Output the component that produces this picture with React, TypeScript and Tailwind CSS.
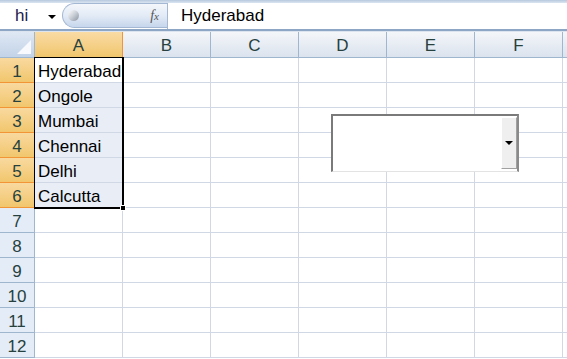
const cols = ["A", "B", "C", "D", "E", "F", "G"];
const cities = ["Hyderabad", "Ongole", "Mumbai", "Chennai", "Delhi", "Calcutta"];
const rows = Array.from({ length: 12 }, (_, i) => i + 1);

const font = { fontFamily: '"Liberation Sans", Arial, sans-serif' };

const FormulaBar = () => (
  <div className="h-[32px] flex flex-col bg-white">
    <div className="h-[3px] bg-gradient-to-b from-[#b7c9de] to-[#dbe5f1]" />
    <div className="flex-1 flex items-stretch">
      {/* name box */}
      <div className="w-[62px] flex items-center pl-[15px] text-[17px] text-[#1a1a4a]">
        <span>hi</span>
        <span className="ml-[20px] mt-[1px] w-0 h-0 border-l-[4px] border-r-[4px] border-t-[4px] border-l-transparent border-r-transparent border-t-black" />
      </div>
      {/* fx bubble */}
      <div className="w-[105px] rounded-l-full border border-r-0 border-[#a4b8d3] bg-gradient-to-b from-[#f4f7fb] via-[#e3ebf6] to-[#c6d6ec] flex items-center mb-[1px]">
        <div className="ml-[5px] w-[11px] h-[11px] rounded-full bg-gradient-to-br from-[#ffffff] via-[#c9ced6] to-[#8a939f]" />
        <span className="ml-auto mr-[8px] text-[14px] italic text-[#555]" style={{ fontFamily: '"Liberation Serif", serif' }}>
          f<span className="text-[11px]">x</span>
        </span>
      </div>
      <div className="w-px bg-[#a4b8d3]" />
      <div className="flex-1 flex items-center pl-[13px] text-[17px] text-black">Hyderabad</div>
    </div>
    <div className="h-[2px] bg-[#8ea6c6]" />
    <div className="h-px bg-[#dbe4ef]" />
  </div>
);

export default function App() {
  return (
    <div className="w-[567px] h-[359px] overflow-hidden relative bg-white" style={font}>
      <FormulaBar />
      {/* column headers */}
      <div className="flex h-[26px]">
        <div className="w-[35px] shrink-0 border-r border-b border-[#9eb6ce] bg-gradient-to-b from-[#dfe8f4] to-[#c3d3e8] relative">
          <svg className="absolute right-[3px] bottom-[3px]" width="14" height="14" viewBox="0 0 14 14">
            <polygon points="14,0 14,14 0,14" fill="#f7f9fc" />
          </svg>
        </div>
        {cols.map((c) => (
          <div
            key={c}
            className={`w-[88px] shrink-0 border-r border-b flex items-center justify-center pt-[2px] text-[17px] text-[#27413e] ${
              c === "A"
                ? "bg-gradient-to-b from-[#f9dba4] to-[#f1c66c] border-[#f29536]"
                : "bg-gradient-to-b from-[#f4f6f9] to-[#dbe3ee] border-[#9eb6ce]"
            }`}
          >
            {c === "G" ? "" : c}
          </div>
        ))}
      </div>
      {/* rows */}
      {rows.map((r) => (
        <div key={r} className="flex h-[25px]">
          <div
            className={`w-[35px] shrink-0 border-r border-b flex items-center justify-center pt-[3px] text-[17px] text-[#27413e] ${
              r <= 6
                ? "bg-gradient-to-b from-[#f9d99f] to-[#f1c66c] border-[#f29536]"
                : "bg-[#e4ecf7] border-[#9eb6ce]"
            }`}
          >
            {r}
          </div>
          {cols.map((c) => (
            <div
              key={c}
              className={`w-[88px] shrink-0 border-r border-b border-[#d0d7e5] flex items-center pl-[3px] pt-[3px] text-[17px] text-black whitespace-nowrap overflow-hidden ${
                c === "A" && r > 1 && r <= 6 ? "bg-[#e8edf6]" : "bg-white"
              }`}
            >
              {c === "A" && r <= 6 ? cities[r - 1] : ""}
            </div>
          ))}
        </div>
      ))}

      {/* selection border */}
      <div className="absolute left-[34px] top-[57px] w-[90px] h-[152px] border-2 border-black border-l border-t pointer-events-none" />
      <div className="absolute left-[120px] top-[205px] w-[6px] h-[6px] bg-black border border-white" />

      {/* combo box control */}
      <div className="absolute left-[331px] top-[114px] w-[188px] h-[58px] bg-white border-l-2 border-t-2 border-r-2 border-b border-l-[#7a7a7a] border-t-[#7a7a7a] border-r-[#8a8a8a] border-b-[#e3e3e3] flex justify-end">
        <div className="w-[16px] mt-[1px] mb-[2px] bg-[#efefef] border-l border-t border-white border-r border-b border-r-[#a0a0a0] border-b-[#a0a0a0] flex items-center justify-center">
          <span className="w-0 h-0 border-l-[4px] border-r-[4px] border-t-[4px] border-l-transparent border-r-transparent border-t-black" />
        </div>
      </div>
    </div>
  );
}
